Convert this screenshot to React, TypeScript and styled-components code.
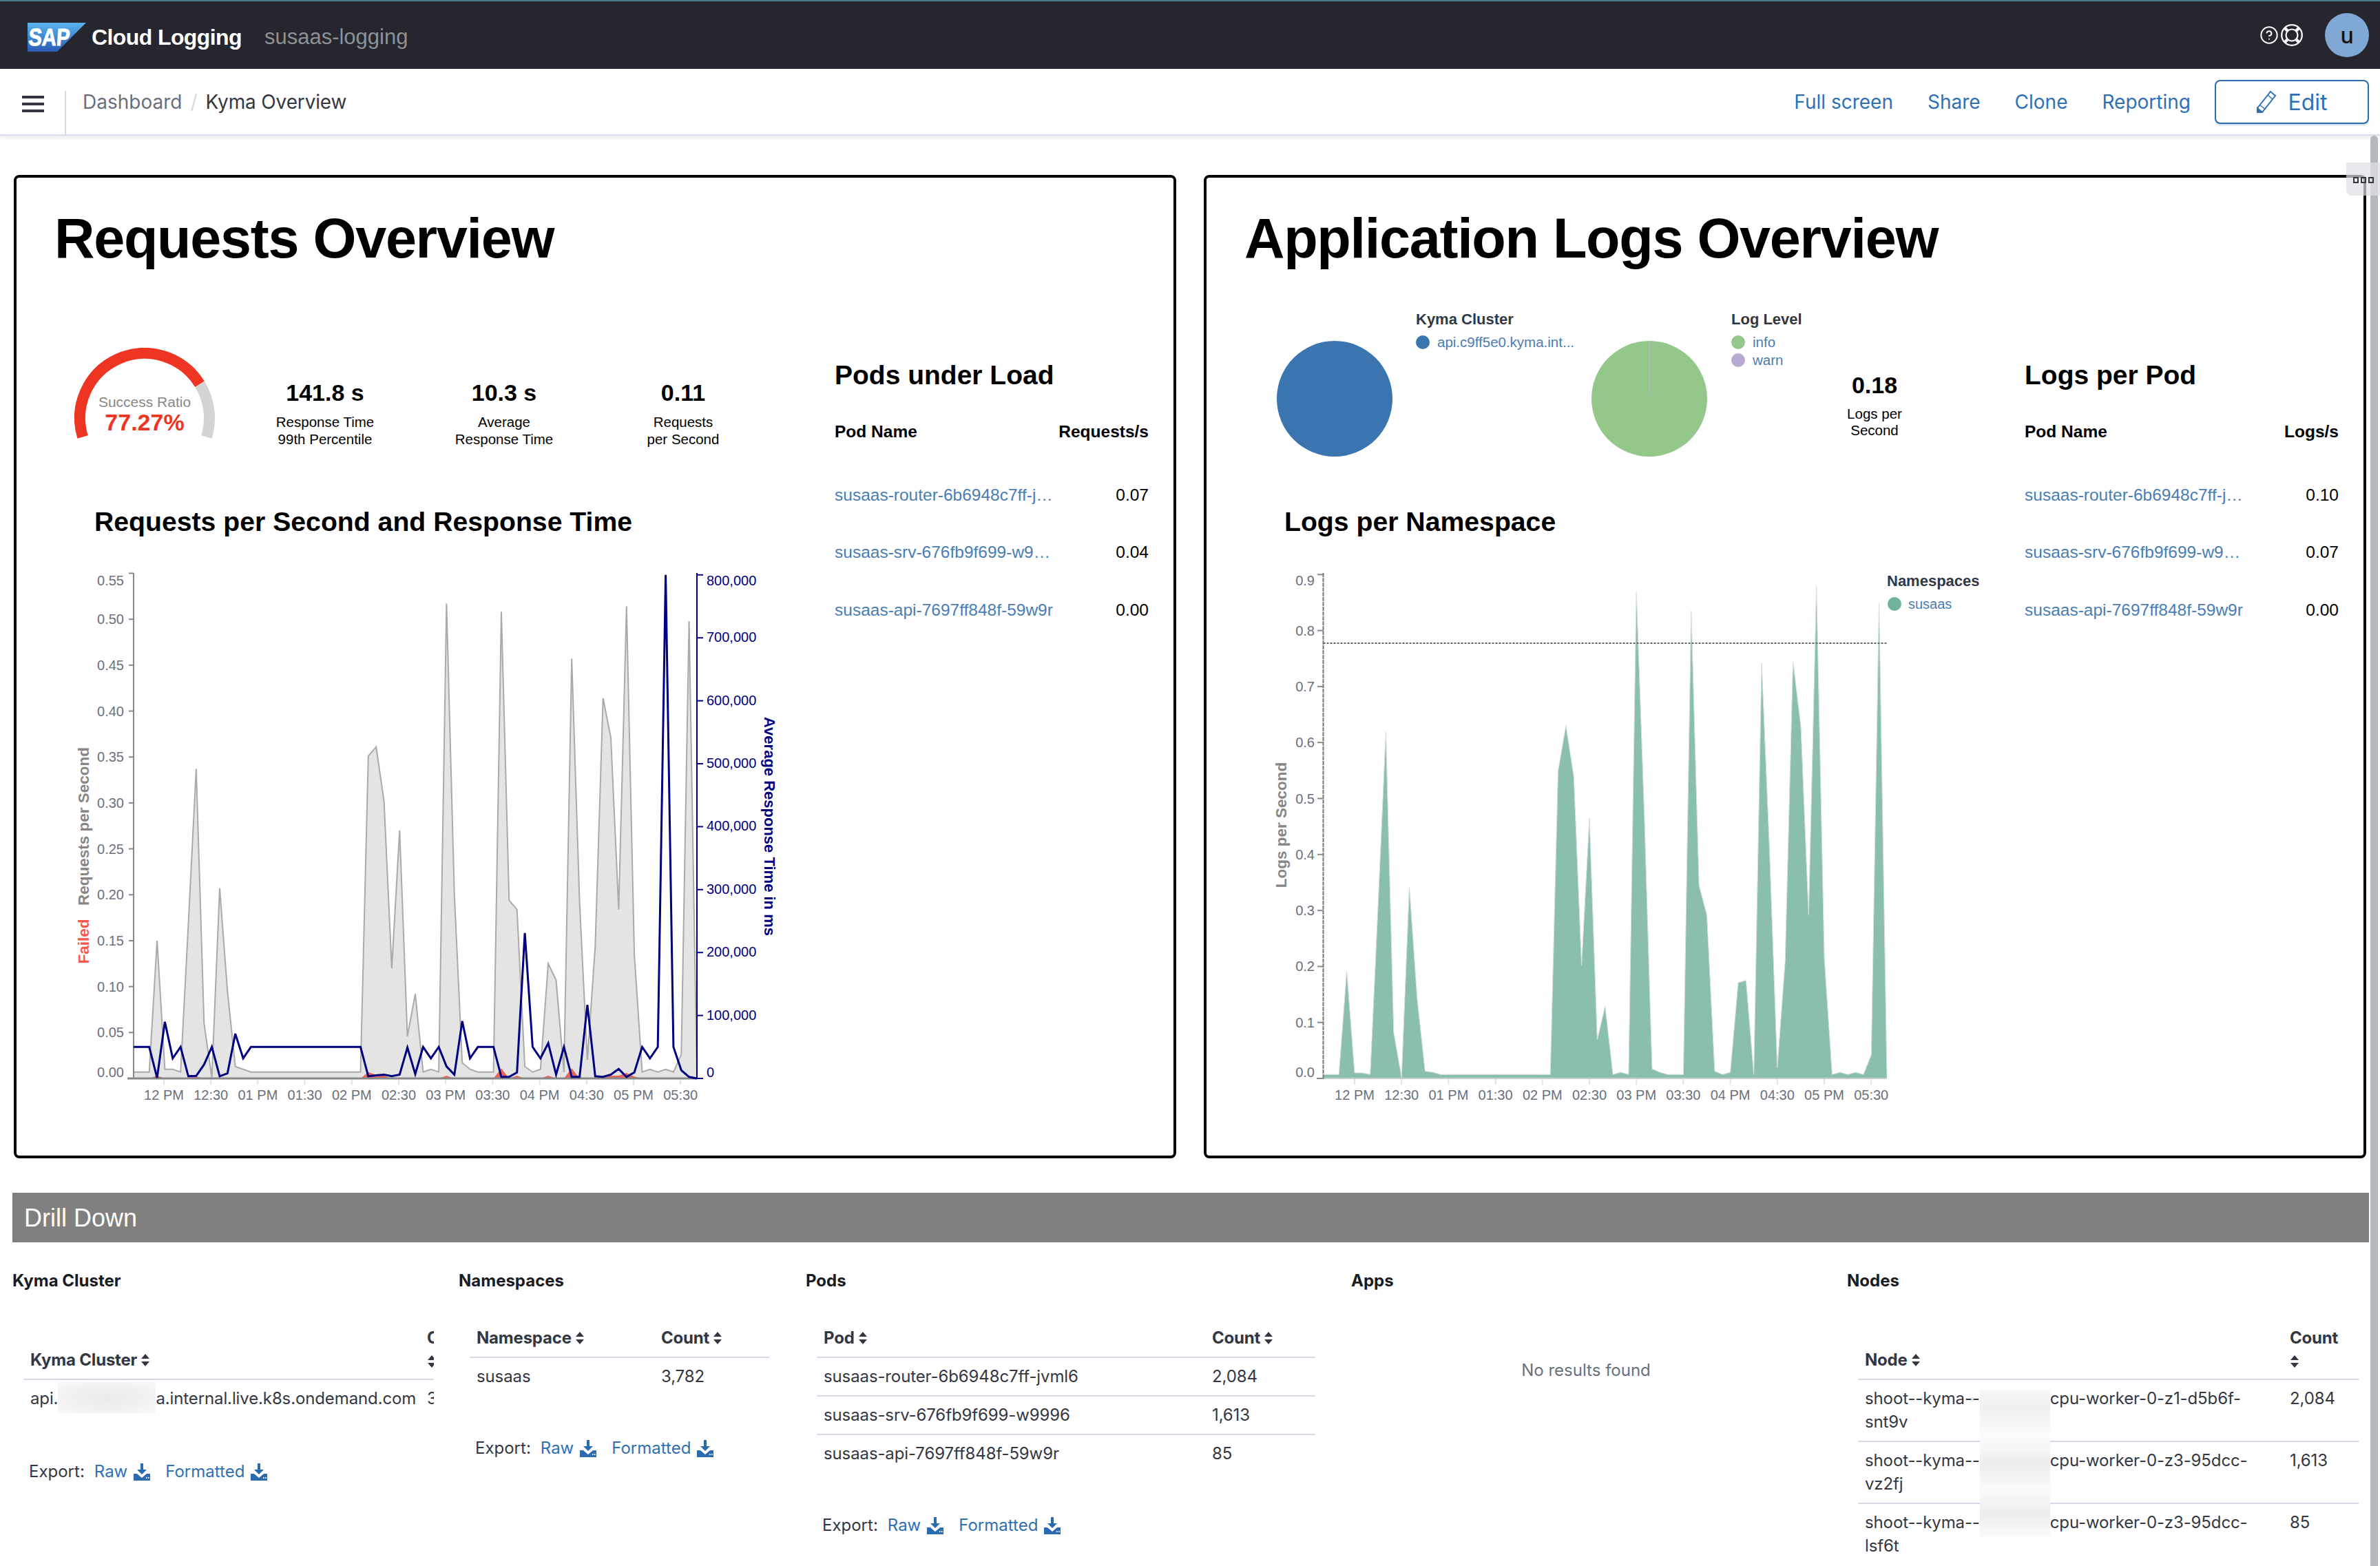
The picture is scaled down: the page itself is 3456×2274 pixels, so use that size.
import React from "react";
import styled, { createGlobalStyle } from "styled-components";
import { CircleHelp } from "lucide-react";

const GlobalStyle = createGlobalStyle`
  html, body {
    margin: 0;
    padding: 0;
    background: #fff;
  }
  * {
    box-sizing: border-box;
  }
`;

const SANS = `"Liberation Sans", Arial, sans-serif`;
const UI = `Inter, "Liberation Sans", sans-serif`;

const Page = styled.div`
  position: relative;
  width: 3456px;
  height: 2274px;
  overflow: hidden;
  background: #fff;
  font-family: ${SANS};
`;

const Scrollbar = styled.div`
  position: absolute;
  top: 197px;
  right: 3px;
  bottom: 0;
  width: 11px;
  border-radius: 6px 6px 0 0;
  background: #b5b7bf;
  z-index: 3;
`;

const PanelHandle = styled.div`
  position: absolute;
  top: 236px;
  right: 0;
  width: 49px;
  height: 48px;
  display: flex;
  align-items: center;
  justify-content: center;
  gap: 3px;
  background: rgba(222, 224, 228, 0.7);
  border-radius: 0 0 0 8px;
  z-index: 4;
  i {
    width: 8px;
    height: 9px;
    margin-top: 2px;
    border: 2px solid #343741;
  }
`;

/* top bar */
const Header = styled.header`
  height: 100px;
  display: flex;
  align-items: center;
  padding: 0 16px 0 40px;
  background: #25262e;
  border-top: 2px solid #4a7e8c;
`;

const Brand = styled.div`
  display: flex;
  align-items: center;
  margin-top: 6px;
`;

const AppName = styled.span`
  margin-left: 8px;
  font-size: 32px;
  font-weight: 700;
  letter-spacing: -0.6px;
  color: #fff;
`;

const SpaceName = styled.span`
  margin-left: 33px;
  font-size: 31px;
  color: #8f9198;
`;

const HeaderTools = styled.div`
  margin-left: auto;
  display: flex;
  align-items: center;
  gap: 3px;
  color: #fff;
`;

const Avatar = styled.div`
  width: 64px;
  height: 64px;
  margin-left: 29px;
  display: flex;
  align-items: center;
  justify-content: center;
  border-radius: 50%;
  background: #7fa8d4;
  color: #111;
  font: 500 32px ${UI};
`;

/* sub nav */
const SubNav = styled.nav`
  height: 97px;
  display: flex;
  padding-right: 16px;
  background: #fff;
  border-bottom: 2px solid #d9dee8;
  box-shadow: 0 3px 5px rgba(152, 162, 179, 0.22);
  font-family: ${UI};
  font-size: 28px;
`;

const MenuBox = styled.div`
  width: 96px;
  height: 65px;
  margin-top: 32px;
  padding: 4px 0 0 32px;
  border-right: 2px solid #d3dae6;
`;

const Crumbs = styled.div`
  display: flex;
  align-items: center;
  height: 40px;
  margin: 28px 0 0 24px;
  color: #343741;
`;

const Crumb = styled.span`
  color: #69707d;
`;

const CrumbSlash = styled.span`
  margin: 0 12px;
  color: #d3dae6;
`;

const CrumbCurrent = styled.span`
  letter-spacing: -0.15px;
`;

const NavActions = styled.div`
  margin-left: auto;
  height: 64px;
  margin-top: 16px;
  display: flex;
  align-items: center;
  gap: 50px;
`;

const NavLink = styled.a`
  color: #2f6fb5;
`;

const EditButton = styled.button`
  width: 224px;
  height: 64px;
  margin-left: -15px;
  display: flex;
  align-items: center;
  justify-content: center;
  gap: 16px;
  background: #fff;
  border: 2px solid #2b6cb0;
  border-radius: 8px;
  box-shadow: 0 2px 2px rgba(43, 108, 176, 0.25);
  color: #2f6fb5;
  font: 400 32px ${UI};
`;

/* panels */
const PanelRow = styled.div`
  display: grid;
  grid-template-columns: 1688px 1688px;
  gap: 40px;
  padding: 57px 0 0 20px;
`;

const Panel = styled.section`
  height: 1428px;
  border: 4px solid #000;
  border-radius: 8px;
`;

const PanelTitle = styled.h1`
  margin: 0;
  height: 192px;
  padding: 40px 0 0 55px;
  font-size: 81px;
  line-height: 96px;
  font-weight: 700;
  letter-spacing: -1.3px;
  color: #000;
`;

const PanelBody = styled.div`
  display: grid;
  grid-template-columns: 1188px 456px;
`;

const MainCol = styled.div`
  display: flex;
  flex-direction: column;
`;

const KpiRow = styled.div<{ $indent: number }>`
  height: 270px;
  display: flex;
  align-items: flex-start;
  padding-left: ${(p) => p.$indent}px;
`;

const GaugeBox = styled.svg`
  margin: 55px 30px 0 0;
  flex: none;
`;

const Kpi = styled.div<{ $top: number; $width: number; $leading: number }>`
  width: ${(p) => p.$width}px;
  flex: none;
  margin-top: ${(p) => p.$top}px;
  text-align: center;
  color: #000;
  font-size: 20.5px;
  line-height: ${(p) => p.$leading}px;
  b {
    display: block;
    margin-bottom: 10px;
    font-size: 34px;
    line-height: 40px;
  }
`;

const Pie = styled.svg<{ $gap: number }>`
  flex: none;
  margin: 45px ${(p) => p.$gap}px 0 0;
`;

const Legend = styled.div<{ $width: number }>`
  width: ${(p) => p.$width}px;
  flex: none;
`;

const LegendTitle = styled.div`
  height: 34px;
  font-size: 22px;
  line-height: 28px;
  font-weight: 700;
  color: #343741;
`;

const LegendItem = styled.div`
  height: 26px;
  display: flex;
  align-items: center;
  gap: 11px;
  font-size: 20.5px;
  color: #4e7cb1;
  white-space: nowrap;
`;

const LegendDot = styled.span<{ $color: string }>`
  width: 20px;
  height: 20px;
  flex: none;
  border-radius: 50%;
  background: ${(p) => p.$color};
`;

const ChartTitle = styled.h2`
  margin: 0;
  height: 72px;
  padding-left: 113px;
  font-size: 39.2px;
  line-height: 75px;
  font-weight: 700;
  color: #000;
`;

const ChartSvg = styled.svg<{ $left: number }>`
  display: block;
  margin-left: ${(p) => p.$left}px;
`;

const SideCol = styled.div`
  padding-top: 71px;
`;

const SideTitle = styled.h2`
  margin: 0 0 34px;
  font-size: 39px;
  line-height: 48px;
  font-weight: 700;
  color: #000;
`;

const SideHead = styled.div`
  height: 48px;
  margin-bottom: 26px;
  display: flex;
  justify-content: space-between;
  align-items: center;
  font-size: 24.5px;
  font-weight: 700;
  color: #000;
`;

const SideRow = styled.div`
  height: 83.5px;
  display: flex;
  justify-content: space-between;
  align-items: center;
  font-size: 24.5px;
  color: #000;
`;

const PodLink = styled.a`
  white-space: nowrap;
  color: #4a7db5;
`;

/* svg text */
const AxisText = styled.text<{ $fill?: string; $weight?: number; $size?: number }>`
  font-family: ${SANS};
  font-size: ${(p) => p.$size ?? 20}px;
  font-weight: ${(p) => p.$weight ?? 400};
  fill: ${(p) => p.$fill ?? "#6a717d"};
`;

/* drill down */
const DrillBar = styled.div`
  height: 72px;
  margin: 50px 16px 0 18px;
  padding-left: 17px;
  background: #808080;
  color: #fff;
  font-size: 36px;
  line-height: 74px;
`;

const DrillGrid = styled.div`
  display: grid;
  grid-template-columns: 648px 504px 792px 720px 738px;
  padding: 40px 0 0 18px;
  font-family: ${UI};
  font-size: 24px;
  line-height: 34px;
  color: #343741;
`;

const DrillTitle = styled.h3`
  margin: 0;
  height: 32px;
  font-size: 24px;
  line-height: 32px;
  font-weight: 700;
  color: #1a1c21;
`;

const TableWrap = styled.div<{ $width: number }>`
  position: relative;
  width: ${(p) => p.$width}px;
  margin: 40px 0 0 16px;
  overflow: hidden;
`;

const Table = styled.table<{ $width: number }>`
  width: ${(p) => p.$width}px;
  table-layout: fixed;
  border-collapse: separate;
  border-spacing: 0;
`;

const Th = styled.th<{ $width: number }>`
  width: ${(p) => p.$width}px;
  padding: 10px;
  vertical-align: bottom;
  text-align: left;
  font-weight: 700;
  letter-spacing: -0.2px;
  border-bottom: 2px solid #d3dae6;
`;

const Td = styled.td<{ $last?: boolean }>`
  padding: 10px;
  vertical-align: top;
  white-space: nowrap;
  letter-spacing: -0.12px;
  border-bottom: ${(p) => (p.$last ? "none" : "2px solid #d3dae6")};
`;

const SortMark = styled.svg<{ $block?: boolean }>`
  display: ${(p) => (p.$block ? "block" : "inline-block")};
  margin: ${(p) => (p.$block ? "8px 0 6px" : "0 0 -1px 5px")};
`;

const Redact = styled.span<{ $width: number; $tint?: boolean }>`
  position: relative;
  display: inline-block;
  width: ${(p) => p.$width}px;
  height: 0;
  &::after {
    content: "";
    position: absolute;
    left: 0;
    right: 0;
    top: -32px;
    height: 45px;
    background: ${(p) =>
      p.$tint ? "radial-gradient(ellipse at center, #ebebeb 0%, #f1f1f1 55%, #f9f9f9 100%)" : "none"};
  }
`;

const NodeRedact = styled.div`
  position: absolute;
  left: 177px;
  top: 102px;
  width: 102px;
  height: 214px;
  background: linear-gradient(
    180deg,
    #f7f7f7 0%,
    #f0f0f0 12%,
    #fbfbfb 30%,
    #f8f8f8 38%,
    #ececec 50%,
    #fbfbfb 68%,
    #ededed 84%,
    #fafafa 100%
  );
`;

const ExportRow = styled.div<{ $top: number }>`
  height: 34px;
  margin: ${(p) => p.$top}px 0 0 24px;
  display: flex;
  align-items: center;
  gap: 14px;
  white-space: nowrap;
`;

const ExportLink = styled.a`
  display: inline-flex;
  align-items: center;
  gap: 9px;
  color: #2f6fb5;
  & + & {
    margin-left: 8px;
  }
`;

const NoResults = styled.div`
  margin-top: 97px;
  padding-right: 38px;
  text-align: center;
  color: #69707d;
`;

const REQUESTS = [
  0.007, 0.007, 0.007, 0.15, 0.01, 0.01, 0.007, 0.168, 0.337, 0.06, 0.001, 0.207, 0.095, 0.013, 0.01,
  ...Array(15).fill(0.007),
  0.351, 0.361, 0.302, 0.12, 0.27, 0.046, 0.092, 0.007, 0.01, 0.007, 0.517, 0.2, 0.017, 0.01, 0.007, 0.007,
  0.007, 0.508, 0.194, 0.184, 0.013, 0.007, 0.01, 0.125, 0.107, 0.007, 0.457, 0.192, 0.02, 0.144, 0.414,
  0.371, 0.184, 0.514, 0.135, 0.007, 0.01, 0.007, 0.01, 0.007, 0.026, 0.498, 0.001,
];

const RESPONSE = [
  50000, 50000, 50000, 1000, 90000, 32000, 50000, 3500, 4000, 22000, 50000, 3500, 8000, 71000, 32000,
  ...Array(15).fill(50000),
  3500, 5000, 6000, 3500, 6000, 49000, 7000, 50000, 32000, 50000, 19000, 6000, 91000, 32000, 50000, 50000,
  50000, 2400, 2400, 9500, 231000, 50000, 32000, 56000, 6000, 50000, 2400, 2400, 117000, 3500, 2400, 6000,
  15000, 2400, 9500, 50000, 32000, 50000, 800000, 50000, 13000, 2400, 0,
];

const FAILED: Record<number, number> = {
  3: 0.003, 7: 0.001, 8: 0.002, 30: 0.007, 31: 0.004, 32: 0.003, 40: 0.003, 47: 0.011, 49: 0.003, 53: 0.003,
  56: 0.011, 59: 0.001, 60: 0.002, 61: 0.003, 62: 0.003, 63: 0.006, 64: 0.002, 71: 0.001,
};

const LOGS = [
  0.007, 0.007, 0.007, 0.192, 0.01, 0.01, 0.007, 0.309, 0.619, 0.082, 0.002, 0.342, 0.142, 0.013, 0.011,
  ...Array(15).fill(0.007),
  0.549, 0.63, 0.539, 0.202, 0.465, 0.069, 0.129, 0.007, 0.011, 0.007, 0.869, 0.475, 0.017, 0.011, 0.007,
  0.007, 0.007, 0.835, 0.344, 0.292, 0.013, 0.007, 0.011, 0.171, 0.175, 0.007, 0.742, 0.409, 0.019, 0.209,
  0.745, 0.629, 0.292, 0.879, 0.215, 0.007, 0.011, 0.007, 0.011, 0.007, 0.042, 0.849, 0.002,
];

const TIMES = ["12 PM", "12:30", "01 PM", "01:30", "02 PM", "02:30", "03 PM", "03:30", "04 PM", "04:30", "05 PM", "05:30"];
const BOTTOM = 1566;

const line = (values: number[], x0: number, step: number, y: (v: number) => number) =>
  values.map((v, i) => `${(x0 + i * step).toFixed(1)},${y(v).toFixed(1)}`).join(" ");

const TimeAxis = ({ first }: { first: number }) => (
  <>
    {TIMES.map((t, i) => {
      const x = first + i * 68.2;
      return (
        <g key={t}>
          <line x1={x} x2={x} y1={BOTTOM + 1} y2={BOTTOM + 9} stroke="#e3e3e3" strokeWidth={2} />
          <AxisText x={x} y={1597} textAnchor="middle">
            {t}
          </AxisText>
        </g>
      );
    })}
  </>
);

const RequestsChart = () => {
  const x0 = 194;
  const step = 818 / 72;
  const yReq = (v: number) => BOTTOM - v * 1333.6;
  const yMs = (v: number) => BOTTOM - v * (91.4 / 100000);
  const ticks = [0, 0.05, 0.1, 0.15, 0.2, 0.25, 0.3, 0.35, 0.4, 0.45, 0.5, 0.55];
  const msTicks = [0, 100000, 200000, 300000, 400000, 500000, 600000, 700000, 800000];
  const req = line(REQUESTS, x0, step, yReq);
  const failed = REQUESTS.map((_, i) => FAILED[i] ?? 0);

  return (
    <ChartSvg $left={76} width={1060} height={830} viewBox="100 792 1060 830">
      <polygon points={`${x0},${BOTTOM} ${req} ${x0 + 72 * step},${BOTTOM}`} fill="#e4e4e4" />
      <polyline points={req} fill="none" stroke="#aaa" strokeWidth={2} />
      <polygon points={`${x0},${BOTTOM} ${line(failed, x0, step, yReq)} ${x0 + 72 * step},${BOTTOM}`} fill="#e7665a" />
      <TimeAxis first={238} />
      <line x1={185} x2={1012} y1={BOTTOM} y2={BOTTOM} stroke="#888" strokeWidth={3} />
      <line x1={x0} x2={x0} y1={832} y2={BOTTOM} stroke="#888" strokeWidth={2} />
      {ticks.map((t, i) => (
        <g key={t}>
          <line x1={187} x2={x0} y1={yReq(t)} y2={yReq(t)} stroke="#888" strokeWidth={2} />
          <AxisText
            x={180}
            y={i === 0 ? 1564 : i === ticks.length - 1 ? 850 : yReq(t) + 7}
            textAnchor="end"
          >
            {t.toFixed(2)}
          </AxisText>
        </g>
      ))}
      <polyline points={line(RESPONSE, x0, step, yMs)} fill="none" stroke="#000080" strokeWidth={3} />
      <line x1={1012} x2={1012} y1={832} y2={BOTTOM} stroke="#000080" strokeWidth={2} />
      {msTicks.map((t, i) => (
        <g key={t}>
          <line x1={1012} x2={1021} y1={yMs(t)} y2={yMs(t)} stroke="#000080" strokeWidth={2} />
          <AxisText
            x={1026}
            y={i === 0 ? 1564 : i === msTicks.length - 1 ? 850 : yMs(t) + 6}
            $fill="#000080"
          >
            {t.toLocaleString("en-US")}
          </AxisText>
        </g>
      ))}
      <AxisText x={0} y={0} $fill="#868686" $weight={700} $size={22.5} textAnchor="middle" transform="translate(129 1200) rotate(-90)">
        Requests per Second
      </AxisText>
      <AxisText x={0} y={0} $fill="#f6584d" $weight={700} $size={22.5} textAnchor="middle" transform="translate(129 1367) rotate(-90)">
        Failed
      </AxisText>
      <AxisText x={0} y={0} $fill="#000080" $weight={700} $size={22} textAnchor="middle" transform="translate(1110 1200) rotate(90)">
        Average Response Time in ms
      </AxisText>
    </ChartSvg>
  );
};

const LogsChart = () => {
  const x0 = 1921.5;
  const step = 818.5 / 72;
  const y = (v: number) => BOTTOM - v * 813;
  const ticks = [0, 0.1, 0.2, 0.3, 0.4, 0.5, 0.6, 0.7, 0.8, 0.9];
  const pts = line(LOGS, x0, step, y);

  return (
    <ChartSvg $left={48} width={1120} height={830} viewBox="1800 792 1120 830">
      <polygon points={`${x0},${BOTTOM} ${pts} ${x0 + 72 * step},${BOTTOM}`} fill="#8bbfad" />
      <polyline points={pts} fill="none" stroke="#d8dedb" strokeWidth={1} />
      <TimeAxis first={1967} />
      <line x1={1912} x2={2740} y1={BOTTOM} y2={BOTTOM} stroke="#c9cfcc" strokeWidth={2} />
      <line x1={1912} x2={x0} y1={BOTTOM} y2={BOTTOM} stroke="#888" strokeWidth={2} />
      <line x1={x0} x2={x0} y1={832} y2={BOTTOM} stroke="#777" strokeWidth={2} strokeDasharray="6 1" />
      <line x1={x0} x2={2740} y1={934} y2={934} stroke="#666" strokeWidth={2} strokeDasharray="3 2" />
      {ticks.map((t, i) => (
        <g key={t}>
          <line x1={1913} x2={x0} y1={y(t)} y2={y(t)} stroke="#888" strokeWidth={2} />
          <AxisText
            x={1909}
            y={i === 0 ? 1564 : i === ticks.length - 1 ? 850 : y(t) + 7}
            textAnchor="end"
          >
            {t.toFixed(1)}
          </AxisText>
        </g>
      ))}
      <AxisText x={0} y={0} $fill="#868686" $weight={700} $size={22.5} textAnchor="middle" transform="translate(1868 1198) rotate(-90)">
        Logs per Second
      </AxisText>
      <AxisText x={2740} y={851} $fill="#343741" $weight={700} $size={22}>
        Namespaces
      </AxisText>
      <circle cx={2751} cy={877} r={10} fill="#6eb39a" />
      <AxisText x={2771} y={884} $fill="#4e7cb1">
        susaas
      </AxisText>
    </ChartSvg>
  );
};

const Gauge = () => {
  const cx = 102;
  const cy = 102;
  const r = 94;
  const point = (deg: number) => {
    const a = (deg * Math.PI) / 180;
    return `${(cx + r * Math.sin(a)).toFixed(2)} ${(cy - r * Math.cos(a)).toFixed(2)}`;
  };
  const split = -107 + 214 * 0.7727;
  return (
    <GaugeBox width={204} height={134} viewBox="0 0 204 134">
      <path d={`M${point(split)} A${r} ${r} 0 0 1 ${point(107)}`} fill="none" stroke="#d4d4d4" strokeWidth={16} />
      <path d={`M${point(-107)} A${r} ${r} 0 0 1 ${point(split)}`} fill="none" stroke="#ee3524" strokeWidth={16} />
      <AxisText x={cx} y={86} $fill="#888" $size={21} textAnchor="middle">
        Success Ratio
      </AxisText>
      <AxisText x={cx} y={120} $fill="#ee3524" $weight={700} $size={34} textAnchor="middle">
        77.27%
      </AxisText>
    </GaugeBox>
  );
};

const SapLogo = () => (
  <svg width="85" height="42" viewBox="0 0 85 42">
    <defs>
      <linearGradient id="sapBlue" x1="0" y1="0" x2="0" y2="1">
        <stop offset="0" stopColor="#58b4ec" />
        <stop offset="1" stopColor="#2c5cb4" />
      </linearGradient>
    </defs>
    <polygon points="0,0 85,0 43,42 0,42" fill="url(#sapBlue)" />
    <text
      x="1"
      y="33"
      transform="skewX(-4) translate(2 0)"
      fontFamily={SANS}
      fontSize="35"
      fontWeight="700"
      fill="#fff"
      stroke="#fff"
      strokeWidth="1"
      textLength="60"
      lengthAdjust="spacingAndGlyphs"
    >
      SAP
    </text>
  </svg>
);

const BuoyIcon = () => (
  <svg width="32" height="32" viewBox="0 0 32 32" fill="none" stroke="#fff">
    <circle cx="16" cy="16" r="14.8" strokeWidth="2.2" />
    <circle cx="16" cy="16" r="8.5" strokeWidth="2.2" />
    <path d="M10 10 5.500 5.500M22 10l4.500-4.500M10 22l-4.500 4.500M22 22l4.500 4.500" strokeWidth="4.500" />
  </svg>
);

const MenuIcon = () => (
  <svg width="32" height="24" viewBox="0 0 32 24" fill="#343741">
    <rect width="32" height="4" />
    <rect y="10" width="32" height="4" />
    <rect y="20" width="32" height="4" />
  </svg>
);

const PencilIcon = () => (
  <svg width="30" height="34" viewBox="0 0 30 34" fill="none" stroke="#2f6fb5" strokeWidth="2">
    <path d="M21 2 L28 8 L9 32 L2 32 L2 26 Z" />
    <path d="M17 7 L24 13 M6 22 L14 28" strokeWidth="1.500" />
    <path d="M2 26 L8 31 L2 32 Z" fill="#2f6fb5" />
  </svg>
);

const SortIcon = ({ block }: { block?: boolean }) => (
  <SortMark $block={block} width="14" height="18" viewBox="0 0 14 18" fill="#343741">
    <path d="M7 0 L13 7 L1 7 Z M7 18 L1 11 L13 11 Z" />
  </SortMark>
);

const DownloadIcon = () => (
  <svg width="24" height="25" viewBox="0 0 24 25" fill="#2b6cb0">
    <path d="M10 0h4v9h5l-7 7-7-7h5z" />
    <path d="M0 15h5l7 6 7-6h5v10H0zM18 20v2h1.500v-2zM21 20v2h1.500v-2z" fillRule="evenodd" />
  </svg>
);

const ExportLinks = ({ top = 60 }: { top?: number }) => (
  <ExportRow $top={top}>
    <span>Export:</span>
    <ExportLink>
      Raw
      <DownloadIcon />
    </ExportLink>
    <ExportLink>
      Formatted
      <DownloadIcon />
    </ExportLink>
  </ExportRow>
);

const PodList = ({ title, unit, rows }: { title: string; unit: string; rows: [string, string][] }) => (
  <SideCol>
    <SideTitle>{title}</SideTitle>
    <SideHead>
      <span>Pod Name</span>
      <span>{unit}</span>
    </SideHead>
    {rows.map(([name, rate]) => (
      <SideRow key={name}>
        <PodLink>{name}</PodLink>
        <span>{rate}</span>
      </SideRow>
    ))}
  </SideCol>
);

const PODS: [string, string][] = [
  ["susaas-router-6b6948c7ff-jvml6", "2,084"],
  ["susaas-srv-676fb9f699-w9996", "1,613"],
  ["susaas-api-7697ff848f-59w9r", "85"],
];

const NODES: [string, string, string][] = [
  ["cpu-worker-0-z1-d5b6f-", "snt9v", "2,084"],
  ["cpu-worker-0-z3-95dcc-", "vz2fj", "1,613"],
  ["cpu-worker-0-z3-95dcc-", "lsf6t", "85"],
];

export default function App() {
  return (
    <Page>
      <GlobalStyle />
      <Header>
        <Brand>
          <SapLogo />
          <AppName>Cloud Logging</AppName>
          <SpaceName>susaas-logging</SpaceName>
        </Brand>
        <HeaderTools>
          <CircleHelp size={28} strokeWidth={1.7} />
          <BuoyIcon />
          <Avatar>u</Avatar>
        </HeaderTools>
      </Header>

      <SubNav>
        <MenuBox>
          <MenuIcon />
        </MenuBox>
        <Crumbs>
          <Crumb>Dashboard</Crumb>
          <CrumbSlash>/</CrumbSlash>
          <CrumbCurrent>Kyma Overview</CrumbCurrent>
        </Crumbs>
        <NavActions>
          <NavLink>Full screen</NavLink>
          <NavLink>Share</NavLink>
          <NavLink>Clone</NavLink>
          <NavLink>Reporting</NavLink>
          <EditButton>
            <PencilIcon />
            Edit
          </EditButton>
        </NavActions>
      </SubNav>

      <PanelRow>
        <Panel>
          <PanelTitle>Requests Overview</PanelTitle>
          <PanelBody>
            <MainCol>
              <KpiRow $indent={84}>
                <Gauge />
                <Kpi $top={100} $width={260} $leading={25}>
                  <b>141.8 s</b>
                  Response Time
                  <br />
                  99th Percentile
                </Kpi>
                <Kpi $top={100} $width={260} $leading={25}>
                  <b>10.3 s</b>
                  Average
                  <br />
                  Response Time
                </Kpi>
                <Kpi $top={100} $width={260} $leading={25}>
                  <b>0.11</b>
                  Requests
                  <br />
                  per Second
                </Kpi>
              </KpiRow>
              <ChartTitle>Requests per Second and Response Time</ChartTitle>
              <RequestsChart />
            </MainCol>
            <PodList
              title="Pods under Load"
              unit="Requests/s"
              rows={[
                ["susaas-router-6b6948c7ff-j…", "0.07"],
                ["susaas-srv-676fb9f699-w9…", "0.04"],
                ["susaas-api-7697ff848f-59w9r", "0.00"],
              ]}
            />
          </PanelBody>
        </Panel>

        <Panel>
          <PanelTitle>Application Logs Overview</PanelTitle>
          <PanelBody>
            <MainCol>
              <KpiRow $indent={102}>
                <Pie $gap={34} width={168} height={168} viewBox="0 0 168 168">
                  <circle cx="84" cy="84" r="84" fill="#3b75af" />
                </Pie>
                <Legend $width={255}>
                  <LegendTitle>Kyma Cluster</LegendTitle>
                  <LegendItem>
                    <LegendDot $color="#3b75af" />
                    api.c9ff5e0.kyma.int...
                  </LegendItem>
                </Legend>
                <Pie $gap={35} width={168} height={168} viewBox="0 0 168 168">
                  <circle cx="84" cy="84" r="84" fill="#93c88a" />
                  <line x1="84" y1="0" x2="84" y2="78" stroke="#b7b4c8" strokeWidth="1.5" />
                </Pie>
                <Legend $width={138}>
                  <LegendTitle>Log Level</LegendTitle>
                  <LegendItem>
                    <LegendDot $color="#93c88a" />
                    info
                  </LegendItem>
                  <LegendItem>
                    <LegendDot $color="#b7a9cf" />
                    warn
                  </LegendItem>
                </Legend>
                <Kpi $top={89} $width={140} $leading={24}>
                  <b>0.18</b>
                  Logs per
                  <br />
                  Second
                </Kpi>
              </KpiRow>
              <ChartTitle>Logs per Namespace</ChartTitle>
              <LogsChart />
            </MainCol>
            <PodList
              title="Logs per Pod"
              unit="Logs/s"
              rows={[
                ["susaas-router-6b6948c7ff-j…", "0.10"],
                ["susaas-srv-676fb9f699-w9…", "0.07"],
                ["susaas-api-7697ff848f-59w9r", "0.00"],
              ]}
            />
          </PanelBody>
        </Panel>
      </PanelRow>

      <DrillBar>Drill Down</DrillBar>

      <DrillGrid>
        <div>
          <DrillTitle>Kyma Cluster</DrillTitle>
          <TableWrap $width={596}>
            <Table $width={670}>
              <thead>
                <tr>
                  <Th $width={576}>
                    Kyma Cluster
                    <SortIcon />
                  </Th>
                  <Th $width={94}>
                    Count
                    <SortIcon block />
                  </Th>
                </tr>
              </thead>
              <tbody>
                <tr>
                  <Td $last>
                    api.
                    <Redact $width={142} $tint />
                    a.internal.live.k8s.ondemand.com
                  </Td>
                  <Td $last>3,782</Td>
                </tr>
              </tbody>
            </Table>
          </TableWrap>
          <ExportLinks top={62} />
        </div>

        <div>
          <DrillTitle>Namespaces</DrillTitle>
          <TableWrap $width={435}>
            <Table $width={435}>
              <thead>
                <tr>
                  <Th $width={268}>
                    Namespace
                    <SortIcon />
                  </Th>
                  <Th $width={167}>
                    Count
                    <SortIcon />
                  </Th>
                </tr>
              </thead>
              <tbody>
                <tr>
                  <Td $last>susaas</Td>
                  <Td $last>3,782</Td>
                </tr>
              </tbody>
            </Table>
          </TableWrap>
          <ExportLinks />
        </div>

        <div>
          <DrillTitle>Pods</DrillTitle>
          <TableWrap $width={724}>
            <Table $width={724}>
              <thead>
                <tr>
                  <Th $width={564}>
                    Pod
                    <SortIcon />
                  </Th>
                  <Th $width={160}>
                    Count
                    <SortIcon />
                  </Th>
                </tr>
              </thead>
              <tbody>
                {PODS.map(([name, count], i) => (
                  <tr key={name}>
                    <Td $last={i === PODS.length - 1}>{name}</Td>
                    <Td $last={i === PODS.length - 1}>{count}</Td>
                  </tr>
                ))}
              </tbody>
            </Table>
          </TableWrap>
          <ExportLinks />
        </div>

        <div>
          <DrillTitle>Apps</DrillTitle>
          <NoResults>No results found</NoResults>
        </div>

        <div>
          <DrillTitle>Nodes</DrillTitle>
          <TableWrap $width={727}>
            <Table $width={727}>
              <thead>
                <tr>
                  <Th $width={617}>
                    Node
                    <SortIcon />
                  </Th>
                  <Th $width={110}>
                    Count
                    <SortIcon block />
                  </Th>
                </tr>
              </thead>
              <tbody>
                {NODES.map(([host, tail, count], i) => (
                  <tr key={tail}>
                    <Td $last={i === NODES.length - 1}>
                      shoot--kyma--
                      <Redact $width={102} />
                      {host}
                      <br />
                      {tail}
                    </Td>
                    <Td $last={i === NODES.length - 1}>{count}</Td>
                  </tr>
                ))}
              </tbody>
            </Table>
            <NodeRedact />
          </TableWrap>
        </div>
      </DrillGrid>

      <PanelHandle>
        <i />
        <i />
        <i />
      </PanelHandle>
      <Scrollbar />
    </Page>
  );
}
